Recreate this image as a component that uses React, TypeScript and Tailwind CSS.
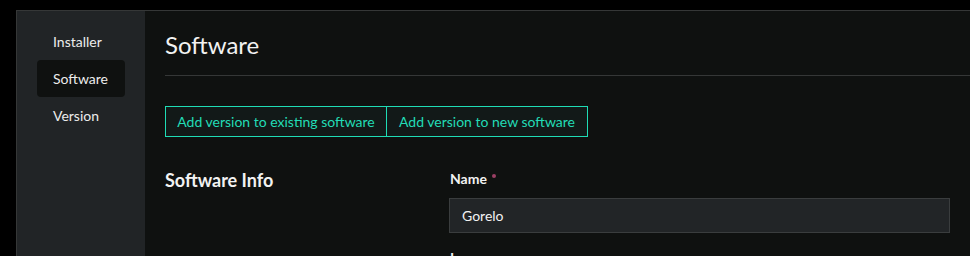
import React from "react";

export default function App() {
  const font = { fontFamily: "Lato, 'Open Sans', sans-serif" };
  return (
    <div className="w-[970px] h-[256px] bg-black overflow-hidden pt-[10px] pl-[16px]" style={font}>
      <div className="flex h-[300px] border-t border-l border-[#353737]">
        <aside className="w-[128px] shrink-0 bg-[#212426] px-[20px] pt-[12px]">
          <div className="h-[37px] flex items-center px-[16px] text-[14px] text-[#ececec]">Installer</div>
          <div className="h-[37px] flex items-center px-[16px] text-[14px] text-[#ececec] bg-[#0f1110] rounded-[4px]">Software</div>
          <div className="h-[37px] flex items-center px-[16px] text-[14px] text-[#ececec]">Version</div>
        </aside>
        <main className="flex-1 bg-[#0f1110] pt-[18px] pl-[20px]">
          <div className="border-b border-[#353737] pb-[14px]">
            <h1 className="text-[24px] leading-[32px] text-[#f2f2f2]">Software</h1>
          </div>
          <div className="mt-[30px] flex">
            <button className="h-[31px] w-[222px] flex items-center justify-center border border-[#1fdcb5] bg-[#121918] text-[14px] text-[#22dcb6] whitespace-nowrap">
              Add version to existing software
            </button>
            <button className="h-[31px] w-[201px] flex items-center justify-center border border-l-0 border-[#1fdcb5] bg-[#121918] text-[14px] text-[#22dcb6] whitespace-nowrap">
              Add version to new software
            </button>
          </div>
          <div className="mt-[29px] flex pr-[20px]">
            <div className="w-[284px] shrink-0">
              <h2 className="text-[18px] leading-[28px] font-bold text-[#f2f2f2]">Software Info</h2>
            </div>
            <div className="flex-1 pt-[3px]">
              <div className="flex items-start">
                <span className="pl-[1px] text-[14px] leading-[20px] font-bold text-[#f2f2f2]">Name</span>
                <span className="ml-[5px] mt-[5px] w-[4px] h-[4px] rounded-full bg-[#9b3f64]"></span>
              </div>
              <div className="mt-[9px] h-[35px] w-[501px] border border-[#3a3d3e] bg-[#222527] flex items-center px-[12px] text-[14px] text-[#f2f2f2]">
                Gorelo
              </div>
              <div className="mt-[15px] pl-[1px] text-[14px] leading-[20px] font-bold text-[#f2f2f2]">Logo</div>
            </div>
          </div>
        </main>
      </div>
    </div>
  );
}
